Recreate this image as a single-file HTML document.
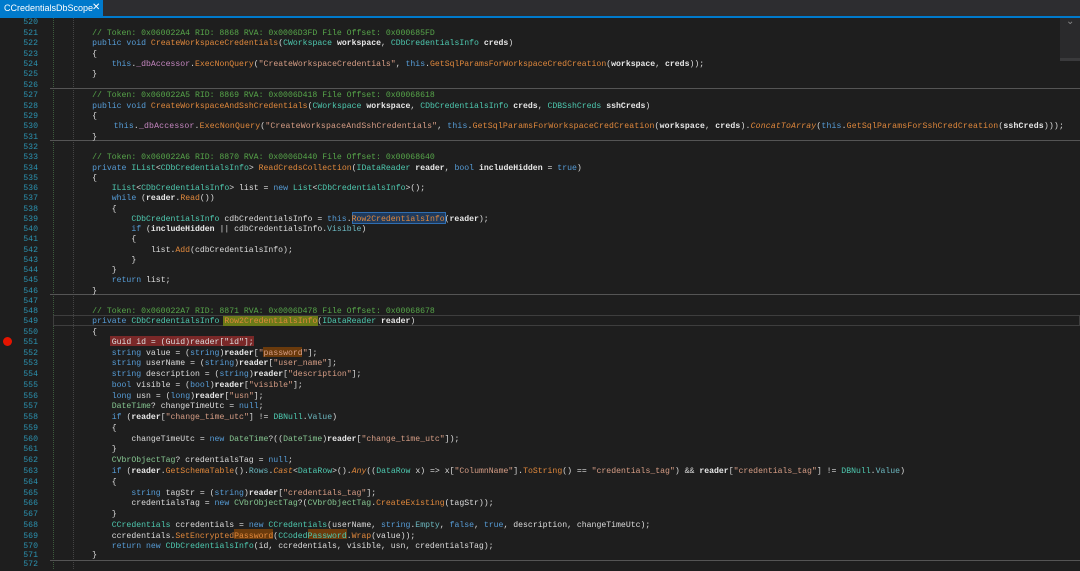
<!DOCTYPE html>
<html><head><meta charset="utf-8"><style>
*{margin:0;padding:0;box-sizing:border-box}
body{width:1080px;height:569px;background:#1e1e1e;overflow:hidden;position:relative;font-family:"Liberation Mono",monospace}
#top{position:absolute;left:0;top:0;width:1080px;height:16px;background:#2d2d30}
#tab{position:absolute;left:0;top:0;width:103px;height:17px;background:#007acc;color:#fff;font:9px "Liberation Sans",sans-serif;line-height:16px;padding-left:4px;white-space:nowrap}
#tab span{position:absolute;left:92px;top:0;font-size:10px}
#bl{position:absolute;left:0;top:16px;width:1080px;height:2px;background:#007acc}
#sb{position:absolute;left:1060px;top:18px;width:20px;height:43px;background:#2a2a2c;border-bottom:3px solid #3a3a3c}
#sb:after{content:"⌄";position:absolute;left:6px;top:-2px;color:#888;font-size:10px}
.ln{position:absolute;left:0;width:38px;text-align:right;color:#2b91af;font-size:8.2px;height:10.42px;line-height:10.42px}
.l{position:absolute;left:53px;white-space:pre;color:#dcdcdc;font-size:8.17px;height:10.42px;line-height:10.42px}
.sep{position:absolute;left:50px;width:1030px;height:1px;background:#555}
.k{color:#569cd6}.t{color:#4ec9b0}.v{color:#86c691}.m{color:#e0883c}.e{color:#e0883c;font-style:italic}
.s{color:#d69d85}.c{color:#57a64a}.p{color:#e8e8e8;font-weight:bold}.f{color:#c586c0}.pr{color:#6cb8c0}
.g{position:absolute;width:1px;border-left:1px dotted #3d5a3d}
</style></head><body>
<div id="top"></div><div id="tab">CCredentialsDbScope<span>✕</span></div><div id="bl"></div><div id="sb"></div>
<div class="g" style="left:53px;top:18px;height:551px"></div>
<div class="g" style="left:73px;top:18px;height:551px;border-color:#444"></div>
<div class="sep" style="top:88px"></div>
<div class="sep" style="top:140px"></div>
<div class="sep" style="top:294px"></div>
<div class="sep" style="top:560px"></div>
<div style="position:absolute;left:53px;top:315px;width:1027px;height:11px;border:1px solid #3e3e3e"></div>
<div style="position:absolute;left:110px;top:336px;width:144px;height:10px;background:#7a2828"></div>
<div style="position:absolute;left:3px;top:337px;width:9px;height:9px;border-radius:50%;background:#e51400"></div>
<div style="position:absolute;left:223px;top:316px;width:95px;height:10px;background:#6b7a18"></div>
<div style="position:absolute;left:352px;top:212px;width:94px;height:12px;border:1px solid #2f6db0;background:#1f3a5c"></div>
<div style="position:absolute;left:263px;top:347px;width:39px;height:10px;background:#6a3a0c"></div>
<div style="position:absolute;left:234px;top:529px;width:39px;height:10px;background:#6a3a0c"></div>
<div style="position:absolute;left:308px;top:529px;width:39px;height:10px;background:#6a3a0c"></div>

<div class="ln" style="top:18.4px">520</div>
<div class="ln" style="top:28.8px">521</div><div class="l" style="top:28.8px"><span class="c">        // Token: 0x060022A4 RID: 8868 RVA: 0x0006D3FD File Offset: 0x000685FD</span></div>
<div class="ln" style="top:39.2px">522</div><div class="l" style="top:39.2px">        <span class="k">public void</span> <span class="m">CreateWorkspaceCredentials</span>(<span class="t">CWorkspace</span> <span class="p">workspace</span>, <span class="t">CDbCredentialsInfo</span> <span class="p">creds</span>)</div>
<div class="ln" style="top:49.6px">523</div><div class="l" style="top:49.6px">        {</div>
<div class="ln" style="top:60px">524</div><div class="l" style="top:60px">            <span class="k">this</span>.<span class="f">_dbAccessor</span>.<span class="m">ExecNonQuery</span>(<span class="s">"CreateWorkspaceCredentials"</span>, <span class="k">this</span>.<span class="m">GetSqlParamsForWorkspaceCredCreation</span>(<span class="p">workspace</span>, <span class="p">creds</span>));</div>
<div class="ln" style="top:70.4px">525</div><div class="l" style="top:70.4px">        }</div>
<div class="ln" style="top:80.7px">526</div>
<div class="ln" style="top:91.1px">527</div><div class="l" style="top:91.1px"><span class="c">        // Token: 0x060022A5 RID: 8869 RVA: 0x0006D418 File Offset: 0x00068618</span></div>
<div class="ln" style="top:101.5px">528</div><div class="l" style="top:101.5px">        <span class="k">public void</span> <span class="m">CreateWorkspaceAndSshCredentials</span>(<span class="t">CWorkspace</span> <span class="p">workspace</span>, <span class="t">CDbCredentialsInfo</span> <span class="p">creds</span>, <span class="t">CDBSshCreds</span> <span class="p">sshCreds</span>)</div>
<div class="ln" style="top:111.9px">529</div><div class="l" style="top:111.9px">        {</div>
<div class="ln" style="top:122.3px">530</div><div class="l" style="top:122.3px;letter-spacing:0.16px">            <span class="k">this</span>.<span class="f">_dbAccessor</span>.<span class="m">ExecNonQuery</span>(<span class="s">"CreateWorkspaceAndSshCredentials"</span>, <span class="k">this</span>.<span class="m">GetSqlParamsForWorkspaceCredCreation</span>(<span class="p">workspace</span>, <span class="p">creds</span>).<span class="e">ConcatToArray</span>(<span class="k">this</span>.<span class="m">GetSqlParamsForSshCredCreation</span>(<span class="p">sshCreds</span>)));</div>
<div class="ln" style="top:132.7px">531</div><div class="l" style="top:132.7px">        }</div>
<div class="ln" style="top:142.9px">532</div>
<div class="ln" style="top:153.2px">533</div><div class="l" style="top:153.2px"><span class="c">        // Token: 0x060022A6 RID: 8870 RVA: 0x0006D440 File Offset: 0x00068640</span></div>
<div class="ln" style="top:163.5px">534</div><div class="l" style="top:163.5px">        <span class="k">private</span> <span class="t">IList</span>&lt;<span class="t">CDbCredentialsInfo</span>&gt; <span class="m">ReadCredsCollection</span>(<span class="t">IDataReader</span> <span class="p">reader</span>, <span class="k">bool</span> <span class="p">includeHidden</span> = <span class="k">true</span>)</div>
<div class="ln" style="top:173.7px">535</div><div class="l" style="top:173.7px">        {</div>
<div class="ln" style="top:184px">536</div><div class="l" style="top:184px">            <span class="t">IList</span>&lt;<span class="t">CDbCredentialsInfo</span>&gt; list = <span class="k">new</span> <span class="t">List</span>&lt;<span class="t">CDbCredentialsInfo</span>&gt;();</div>
<div class="ln" style="top:194.2px">537</div><div class="l" style="top:194.2px">            <span class="k">while</span> (<span class="p">reader</span>.<span class="m">Read</span>())</div>
<div class="ln" style="top:204.5px">538</div><div class="l" style="top:204.5px">            {</div>
<div class="ln" style="top:214.7px">539</div><div class="l" style="top:214.7px">                <span class="t">CDbCredentialsInfo</span> cdbCredentialsInfo = <span class="k">this</span>.<span class="m">Row2CredentialsInfo</span>(<span class="p">reader</span>);</div>
<div class="ln" style="top:225px">540</div><div class="l" style="top:225px">                <span class="k">if</span> (<span class="p">includeHidden</span> || cdbCredentialsInfo.<span class="pr">Visible</span>)</div>
<div class="ln" style="top:235.2px">541</div><div class="l" style="top:235.2px">                {</div>
<div class="ln" style="top:245.5px">542</div><div class="l" style="top:245.5px">                    list.<span class="m">Add</span>(cdbCredentialsInfo);</div>
<div class="ln" style="top:255.7px">543</div><div class="l" style="top:255.7px">                }</div>
<div class="ln" style="top:266px">544</div><div class="l" style="top:266px">            }</div>
<div class="ln" style="top:276.2px">545</div><div class="l" style="top:276.2px">            <span class="k">return</span> list;</div>
<div class="ln" style="top:286.5px">546</div><div class="l" style="top:286.5px">        }</div>
<div class="ln" style="top:296.7px">547</div>
<div class="ln" style="top:307px">548</div><div class="l" style="top:307px"><span class="c">        // Token: 0x060022A7 RID: 8871 RVA: 0x0006D478 File Offset: 0x00068678</span></div>
<div class="ln" style="top:317.2px">549</div><div class="l" style="top:317.2px">        <span class="k">private</span> <span class="t">CDbCredentialsInfo</span> <span class="m">Row2CredentialsInfo</span>(<span class="t">IDataReader</span> <span class="p">reader</span>)</div>
<div class="ln" style="top:327.5px">550</div><div class="l" style="top:327.5px">        {</div>
<div class="ln" style="top:337.7px">551</div><div class="l" style="top:337.7px">            Guid id = (Guid)reader["id"];</div>
<div class="ln" style="top:348.5px">552</div><div class="l" style="top:348.5px">            <span class="k">string</span> value = (<span class="k">string</span>)<span class="p">reader</span>[<span class="s">"password"</span>];</div>
<div class="ln" style="top:359.2px">553</div><div class="l" style="top:359.2px">            <span class="k">string</span> userName = (<span class="k">string</span>)<span class="p">reader</span>[<span class="s">"user_name"</span>];</div>
<div class="ln" style="top:370px">554</div><div class="l" style="top:370px">            <span class="k">string</span> description = (<span class="k">string</span>)<span class="p">reader</span>[<span class="s">"description"</span>];</div>
<div class="ln" style="top:380.8px">555</div><div class="l" style="top:380.8px">            <span class="k">bool</span> visible = (<span class="k">bool</span>)<span class="p">reader</span>[<span class="s">"visible"</span>];</div>
<div class="ln" style="top:391.6px">556</div><div class="l" style="top:391.6px">            <span class="k">long</span> usn = (<span class="k">long</span>)<span class="p">reader</span>[<span class="s">"usn"</span>];</div>
<div class="ln" style="top:402.3px">557</div><div class="l" style="top:402.3px">            <span class="v">DateTime</span>? changeTimeUtc = <span class="k">null</span>;</div>
<div class="ln" style="top:413.1px">558</div><div class="l" style="top:413.1px">            <span class="k">if</span> (<span class="p">reader</span>[<span class="s">"change_time_utc"</span>] != <span class="t">DBNull</span>.<span class="pr">Value</span>)</div>
<div class="ln" style="top:423.9px">559</div><div class="l" style="top:423.9px">            {</div>
<div class="ln" style="top:434.6px">560</div><div class="l" style="top:434.6px">                changeTimeUtc = <span class="k">new</span> <span class="v">DateTime</span>?((<span class="v">DateTime</span>)<span class="p">reader</span>[<span class="s">"change_time_utc"</span>]);</div>
<div class="ln" style="top:445.4px">561</div><div class="l" style="top:445.4px">            }</div>
<div class="ln" style="top:456.2px">562</div><div class="l" style="top:456.2px">            <span class="v">CVbrObjectTag</span>? credentialsTag = <span class="k">null</span>;</div>
<div class="ln" style="top:467px">563</div><div class="l" style="top:467px">            <span class="k">if</span> (<span class="p">reader</span>.<span class="m">GetSchemaTable</span>().<span class="pr">Rows</span>.<span class="e">Cast</span>&lt;<span class="t">DataRow</span>&gt;().<span class="e">Any</span>((<span class="t">DataRow</span> x) =&gt; x[<span class="s">"ColumnName"</span>].<span class="m">ToString</span>() == <span class="s">"credentials_tag"</span>) &amp;&amp; <span class="p">reader</span>[<span class="s">"credentials_tag"</span>] != <span class="t">DBNull</span>.<span class="pr">Value</span>)</div>
<div class="ln" style="top:477.7px">564</div><div class="l" style="top:477.7px">            {</div>
<div class="ln" style="top:488.5px">565</div><div class="l" style="top:488.5px">                <span class="k">string</span> tagStr = (<span class="k">string</span>)<span class="p">reader</span>[<span class="s">"credentials_tag"</span>];</div>
<div class="ln" style="top:499.3px">566</div><div class="l" style="top:499.3px">                credentialsTag = <span class="k">new</span> <span class="v">CVbrObjectTag</span>?(<span class="v">CVbrObjectTag</span>.<span class="m">CreateExisting</span>(tagStr));</div>
<div class="ln" style="top:510.1px">567</div><div class="l" style="top:510.1px">            }</div>
<div class="ln" style="top:520.8px">568</div><div class="l" style="top:520.8px">            <span class="t">CCredentials</span> ccredentials = <span class="k">new</span> <span class="t">CCredentials</span>(userName, <span class="k">string</span>.<span class="pr">Empty</span>, <span class="k">false</span>, <span class="k">true</span>, description, changeTimeUtc);</div>
<div class="ln" style="top:531.6px">569</div><div class="l" style="top:531.6px">            ccredentials.<span class="m">SetEncryptedPassword</span>(<span class="t">CCodedPassword</span>.<span class="m">Wrap</span>(value));</div>
<div class="ln" style="top:542.4px">570</div><div class="l" style="top:542.4px">            <span class="k">return new</span> <span class="t">CDbCredentialsInfo</span>(id, ccredentials, visible, usn, credentialsTag);</div>
<div class="ln" style="top:551.4px">571</div><div class="l" style="top:551.4px">        }</div>
<div class="ln" style="top:560.4px">572</div>
</body></html>
